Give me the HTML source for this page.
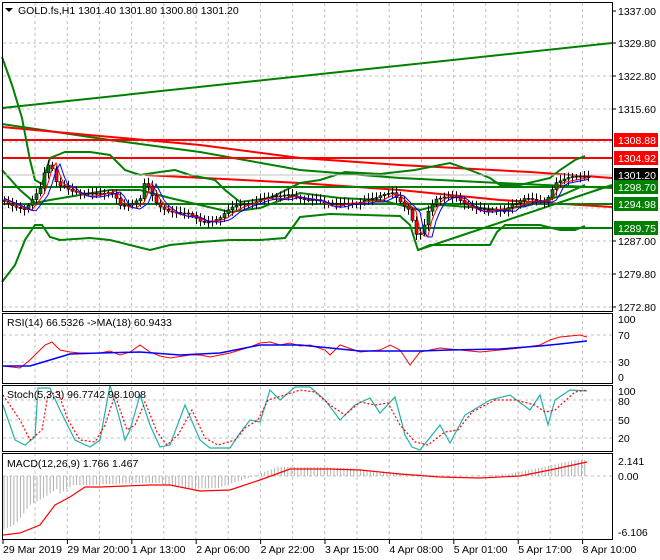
<!DOCTYPE html>
<html><head><meta charset="utf-8"><style>
html,body{margin:0;padding:0;background:#fff;}
svg{display:block;font-family:"Liberation Sans",sans-serif;font-size:10.5px;}
</style></head><body>
<svg id="s" width="660" height="560" xmlns="http://www.w3.org/2000/svg">
<rect width="660" height="560" fill="#fff"/>
<g id="grid" stroke="#c0c0c0" stroke-dasharray="3,3" stroke-width="1"></g>
<g fill="none" stroke-width="2">
<line x1="2" y1="108" x2="612" y2="43" stroke="#008000"/>
<polyline stroke="#008000" points="2,124 110,140 200,152 300,170 400,178 500,183 612,188"/>
<polyline stroke="#ff0000" points="2,127 100,136 200,145 300,158 400,165 530,172 612,178"/>
<polyline stroke="#ff0000" points="145,175 300,183 400,190 500,200 612,207"/>
<line x1="2" y1="140" x2="612" y2="140" stroke="#ff0000"/>
<line x1="2" y1="158" x2="612" y2="158" stroke="#ff0000"/>
<line x1="2" y1="187" x2="612" y2="187" stroke="#008000"/>
<line x1="2" y1="204" x2="612" y2="204" stroke="#008000"/>
<line x1="2" y1="228" x2="612" y2="228" stroke="#008000"/>
<line x1="418" y1="250" x2="612" y2="185" stroke="#008000"/>
<polyline stroke="#008000" points="2,57 12,85 22,118 30,160 35,180 42,184 50,158 65,152 90,152 110,155 125,170 140,175 160,172 175,170 190,175 215,180 225,190 240,202 270,198 300,183 320,180 345,172 380,174 415,170 450,163 470,170 490,178 500,185 520,185 550,178 560,170 575,160 585,156"/>
<polyline stroke="#008000" points="2,282 15,265 25,240 35,225 42,225 50,237 60,240 90,238 110,240 130,245 150,250 170,245 200,242 230,240 260,240 285,238 300,217 330,214 400,216 410,225 418,250 430,245 470,245 490,245 497,232 505,225 540,225 560,230 575,230 585,226"/>
<polyline stroke="#008000" points="2,170 20,190 35,203 50,200 80,195 110,190 140,190 170,198 200,205 230,212 260,208 300,193 340,198 380,200 400,205 420,210 440,205 470,207 500,210 530,205 560,196 585,185"/>
</g>
<line x1="2" y1="175" x2="612" y2="175" stroke="#c0c0c0"/>
<g id="cand"></g>
<polyline id="mar" fill="none" stroke="#ff0000" stroke-width="1"/>
<polyline id="mab" fill="none" stroke="#0000ff" stroke-width="1"/>
<polyline fill="none" stroke="#ff0000" points="3,366 20,368 30,360 45,345 52,342 60,350 70,352 80,353 100,353 110,351 120,355 130,352 140,345 150,352 160,356 170,358 190,355 200,355 210,357 230,353 250,347 260,343 270,342 280,345 290,343 300,346 310,345 325,350 330,355 340,345 360,352 380,350 390,345 400,350 410,365 420,352 440,348 460,350 480,352 500,350 520,348 540,345 550,340 560,337 580,335 587,337"/>
<polyline fill="none" stroke="#0000ff" stroke-width="1.5" points="3,366 30,366 50,360 70,354 100,353 140,352 180,355 220,353 260,345 300,345 330,348 360,351 400,351 420,351 450,350 500,349 540,346 560,344 587,341"/>
<polyline fill="none" stroke="#20b2aa" stroke-width="1.2" points="3,405 15,440 25,445 35,437 38,388 50,388 60,410 75,440 90,447 100,440 110,385 120,420 125,440 130,430 140,395 150,425 160,447 170,445 185,405 200,440 210,448 230,448 240,433 250,420 260,422 270,390 280,400 295,387 310,387 325,400 340,420 355,405 370,398 380,413 395,397 405,435 412,447 420,450 440,425 450,443 465,415 490,400 510,395 530,410 540,395 548,425 555,400 570,390 587,391"/>
<polyline fill="none" stroke="#ff0000" stroke-dasharray="2,2" stroke-width="1.2" points="3,395 20,420 30,440 42,430 48,395 58,392 68,420 80,440 95,442 105,425 115,395 127,430 135,425 145,402 157,432 167,445 178,435 192,410 205,438 218,445 235,440 245,428 258,420 268,400 285,395 300,390 315,392 330,405 345,415 360,402 375,405 388,403 400,425 415,442 428,445 445,432 458,430 472,412 495,400 515,400 535,405 545,412 555,410 575,392 587,390"/>
<g id="macd"></g>
<polyline fill="none" stroke="#ff0000" stroke-width="1.2" points="3,535 20,533 40,525 55,505 70,497 85,487 100,487 150,485 170,485 200,491 230,490 260,480 290,469 330,469 360,470 400,474 440,477 480,478 520,476 550,470 587,462"/>
<g fill="none" stroke="#000" stroke-width="1">
<rect x="2.5" y="2.5" width="610" height="309"/>
<rect x="2.5" y="313.5" width="610" height="70"/>
<rect x="2.5" y="385.5" width="610" height="66"/>
<rect x="2.5" y="453.5" width="610" height="86"/>
</g>
<path d="M5,8 L13,8 L9,12 Z" fill="#000"/>
<text x="18" y="14" fill="#000">GOLD.fs,H1  1301.40 1301.80 1300.80 1301.20</text>
<text x="7" y="326" fill="#000">RSI(14) 66.5326  -&gt;MA(18) 60.9433</text>
<text x="7" y="398" fill="#000">Stoch(5,3,3) 96.7742 98.1008</text>
<text x="7" y="467" fill="#000">MACD(12,26,9) 1.766 1.467</text>
<g id="ax" fill="#000"></g>
<g>
<rect x="614" y="133" width="44" height="14" fill="#ff0000"/><text x="618" y="144" fill="#fff">1308.88</text>
<rect x="614" y="151" width="44" height="14" fill="#ff0000"/><text x="618" y="162" fill="#fff">1304.92</text>
<rect x="614" y="168" width="44" height="14" fill="#000"/><text x="618" y="179" fill="#fff">1301.20</text>
<rect x="614" y="180" width="44" height="14" fill="#008000"/><text x="618" y="191" fill="#fff">1298.70</text>
<rect x="614" y="197" width="44" height="14" fill="#008000"/><text x="618" y="208" fill="#fff">1294.98</text>
<rect x="614" y="221" width="44" height="14" fill="#008000"/><text x="618" y="232" fill="#fff">1289.75</text>
</g>
</svg>
<script>
(function(){
var NS="http://www.w3.org/2000/svg";
function el(p,t,a,txt){var e=document.createElementNS(NS,t);for(var k in a)e.setAttribute(k,a[k]);if(txt)e.textContent=txt;p.appendChild(e);return e;}
var g=document.getElementById('grid');
for(var x=35;x<612;x+=32.2){el(g,'line',{x1:x,y1:3,x2:x,y2:539});}
[43,76,109,142,175,208,241,274,307].forEach(function(y){el(g,'line',{x1:3,y1:y,x2:612,y2:y});});
[335,362].forEach(function(y){el(g,'line',{x1:3,y1:y,x2:612,y2:y});});
[400,420,438].forEach(function(y){el(g,'line',{x1:3,y1:y,x2:612,y2:y});});
el(g,'line',{x1:3,y1:476,x2:612,y2:476});
var ax=document.getElementById('ax');
var pl=[[11,"1337.00"],[43,"1329.80"],[76,"1322.80"],[109,"1315.60"],[241,"1287.00"],[274,"1279.80"],[307,"1272.80"]];
pl.forEach(function(p){el(ax,'text',{x:618,y:p[0]+4},p[1]);el(ax,'line',{x1:612,y1:p[0],x2:616,y2:p[0],stroke:'#000'});});
[[319,"100"],[335,"70"],[362,"30"],[377,"0"],[391,"100"],[401,"80"],[420,"50"],[438,"20"],[461,"2.141"],[476,"0.00"],[532,"-6.106"]].forEach(function(p){el(ax,'text',{x:618,y:p[0]+4},p[1]);});
var tl=["29 Mar 2019","29 Mar 20:00","1 Apr 13:00","2 Apr 06:00","2 Apr 22:00","3 Apr 15:00","4 Apr 08:00","5 Apr 01:00","5 Apr 17:00","8 Apr 10:00"];
tl.forEach(function(t,i){var x=3+64.4*i;el(ax,'text',{x:x,y:553},t);el(ax,'line',{x1:x,y1:540,x2:x,y2:544,stroke:'#000'});});
var pts=[[3,200],[15,205],[25,210],[33,200],[40,190],[45,170],[50,162],[57,183],[65,185],[70,190],[80,195],[90,195],[100,193],[110,190],[115,195],[120,205],[130,207],[140,200],[145,180],[150,190],[155,200],[160,205],[170,212],[180,215],[190,215],[200,220],[210,220],[220,218],[230,210],[240,205],[250,202],[260,198],[270,197],[280,198],[290,195],[300,197],[315,199],[325,205],[335,205],[345,202],[355,202],[365,200],[375,200],[385,195],[392,192],[400,200],[410,210],[415,235],[422,235],[427,215],[435,200],[445,195],[455,195],[465,205],[475,210],[485,210],[495,208],[505,210],[510,205],[515,205],[525,200],[535,200],[545,200],[550,192],[555,182],[565,180],[575,178],[587,176]];
function at(x){for(var i=1;i<pts.length;i++){if(pts[i][0]>=x){var a=pts[i-1],b=pts[i];return a[1]+(b[1]-a[1])*(x-a[0])/(b[0]-a[0]);}}return pts[pts.length-1][1];}
var c=document.getElementById('cand');var prev=at(3);var mr=[],mb=[];
for(var x=4;x<=588;x+=4){var cl=at(x)+Math.sin(x*1.7)*2;var op=prev;var hi=Math.min(op,cl)-2-Math.abs(Math.sin(x*0.9))*4;var lo=Math.max(op,cl)+2+Math.abs(Math.cos(x*1.3))*4;
el(c,'line',{x1:x+.5,y1:hi,x2:x+.5,y2:lo,stroke:'#000'});
var ty=Math.min(op,cl),h=Math.max(1,Math.abs(op-cl));
el(c,'rect',{x:x-1,y:ty,width:3,height:h,fill:cl<op?'#008000':'#ff0000',stroke:'#000','stroke-width':0.6});
prev=cl;mr.push(x+','+(at(x-6)+1));mb.push(x+','+(at(x-10)+2));}
document.getElementById('mar').setAttribute('points',mr.join(' '));
document.getElementById('mab').setAttribute('points',mb.join(' '));
var sig=[[3,535],[20,533],[40,525],[55,505],[70,497],[85,487],[100,487],[150,485],[170,485],[200,491],[230,490],[260,480],[290,469],[330,469],[360,470],[400,474],[440,477],[480,478],[520,476],[550,470],[587,462]];
function sg(x){for(var i=1;i<sig.length;i++){if(sig[i][0]>=x){var a=sig[i-1],b=sig[i];return a[1]+(b[1]-a[1])*(x-a[0])/(b[0]-a[0]);}}return 462;}
var m=document.getElementById('macd');
for(var x=4;x<=588;x+=3.3){var v=sg(x+12)-2;if(x<60)v=sg(x+25);var y2=Math.max(v,458);el(m,'line',{x1:x,y1:476,x2:x,y2:y2,stroke:'#b0b0b0'});}
})();
</script>
</body></html>
